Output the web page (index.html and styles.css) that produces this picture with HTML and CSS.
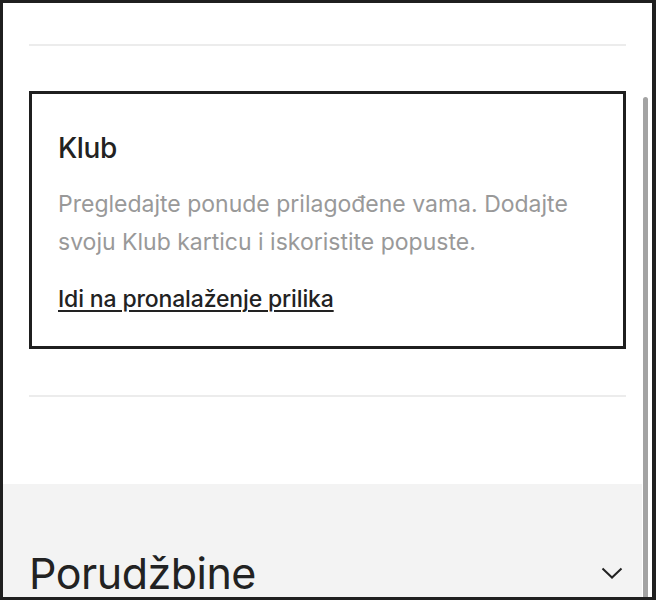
FILE: index.html
```html
<!DOCTYPE html>
<html lang="sr">
<head>
<meta charset="utf-8">
<title>Klub</title>
<link rel="stylesheet" href="styles.css">
</head>
<body>
<div class="frame">
  <div class="content">
    <div class="top-space"></div>
    <hr class="divider">
    <section class="club-card">
      <h2 class="club-title">Klub</h2>
      <p class="club-text">Pregledajte ponude prilagođene vama. Dodajte svoju Klub karticu i iskoristite popuste.</p>
      <a class="club-link" href="#">Idi na pronalaženje prilika</a>
    </section>
    <hr class="divider divider-bottom">
  </div>
  <div class="orders">
    <div class="orders-row">
      <h2 class="orders-title">Porudžbine</h2>
      <svg class="chevron" width="24" height="24" viewBox="0 0 24 24" aria-hidden="true">
        <path d="M2.5 7.5 L12 16.5 L21.5 7.5" fill="none" stroke="#222" stroke-width="2"/>
      </svg>
    </div>
  </div>
  <div class="scroll-track"><div class="scroll-thumb"></div></div>
</div>
</body>
</html>
```
FILE: styles.css
```css
* { box-sizing: border-box; }
html, body { margin: 0; padding: 0; background: #fff; }
body { font-family: Inter, "Liberation Sans", sans-serif; color: #222; }

.frame {
  position: relative;
  width: 656px;
  height: 600px;
  border: 3px solid #1f1f1f;
  border-right-width: 4px;
  overflow: hidden;
  background: #fff;
}

.content { padding: 0 26px; }
.top-space { height: 41px; }

.divider {
  margin: 0;
  border: 0;
  height: 2px;
  background: #ececec;
}

.club-card {
  margin-top: 45px;
  border: 3px solid #1f1f1f;
  padding: 37px 26px 27px;
  height: 258px;
}

.club-title {
  margin: 0;
  font-size: 28px;
  line-height: 34px;
  font-weight: 500;
  letter-spacing: -0.4px;
  color: #222;
}

.club-text {
  margin: 20px 0 0;
  font-size: 23px;
  line-height: 38px;
  color: #999;
}

.club-link {
  display: inline-block;
  margin-top: 19px;
  font-size: 23px;
  line-height: 38px;
  color: #222;
  font-weight: 500;
  letter-spacing: -0.15px;
  text-decoration: underline;
  text-decoration-thickness: 2px;
  text-underline-offset: 3px;
}

.divider-bottom { margin-top: 46px; }

.orders {
  margin-top: 87px;
  background: #f3f3f3;
  padding: 63px 26px 0;
  height: 200px;
}

.orders-row {
  display: flex;
  align-items: center;
  justify-content: space-between;
}

.orders-title {
  margin: 0;
  font-size: 43px;
  line-height: 52px;
  font-weight: 400;
  letter-spacing: -0.5px;
  color: #222;
}

.chevron { display: block; margin-right: 2px; }

.scroll-track {
  position: absolute;
  top: 0;
  right: 0;
  bottom: 0;
  width: 10px;
  background: #fff;
  padding-top: 94px;
}

.scroll-thumb {
  width: 5px;
  height: 100%;
  margin-left: 1px;
  background: #a3a3a3;
  border-radius: 3px 3px 0 0;
}
```
